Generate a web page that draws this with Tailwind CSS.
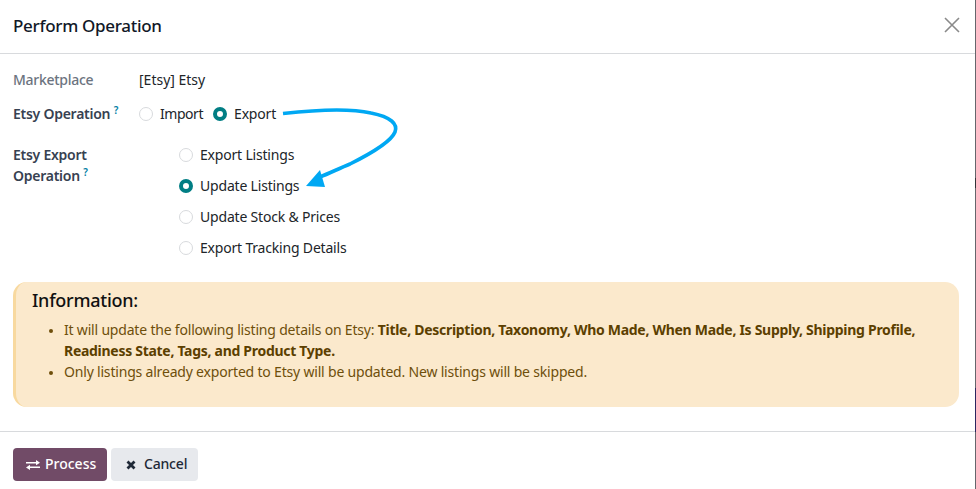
<!DOCTYPE html>
<html><head><meta charset="utf-8"><script src="https://cdn.jsdelivr.net/npm/@tailwindcss/browser@4"></script></head>
<body class="bg-white">
<div class="relative w-[976px] h-[489px] overflow-hidden bg-white font-['Noto_Sans',sans-serif] text-[14px] leading-[21px] text-[#212529] tracking-[-0.19px]">
  <header class="h-[54px] border-b border-[#d8dadd] flex items-center justify-between pl-[13px] pr-[15px] pb-[2px] mr-px">
    <h1 class="text-[17px] font-medium text-[#111827] tracking-[-0.3px] -mt-[1px]">Perform Operation</h1>
    <svg class="w-[16px] h-[16px] -mt-[1px]" viewBox="0 0 16 16"><path d="M1 1L15 15M15 1L1 15" stroke="#8a8a8a" stroke-width="1.6" fill="none"/></svg>
  </header>
  <main class="px-[13px] pt-[15px]">
    <div class="flex h-[21px]">
      <span class="w-[126px] font-medium text-[#6c7480] tracking-[-0.28px]">Marketplace</span>
      <span class="tracking-normal">[Etsy] Etsy</span>
    </div>
    <div class="flex h-[21px] mt-[13px] items-center">
      <span class="w-[126px] font-semibold text-[#374151] tracking-[-0.26px]">Etsy Operation <sup class="text-[#0180a5] text-[10px]">?</sup></span>
      <label class="flex items-center tracking-[-0.45px]"><i class="block w-[14px] h-[14px] rounded-full border border-[#d8dadd] mr-[7px]"></i>Import</label>
      <label class="flex items-center ml-[10px]"><i class="block w-[14px] h-[14px] rounded-full border-[4px] border-[#017e84] mr-[7px]"></i>Export</label>
    </div>
    <div class="flex mt-[20px]">
      <span class="w-[166px] font-semibold text-[#374151] tracking-[-0.26px]">Etsy Export<br>Operation <sup class="text-[#0180a5] text-[10px]">?</sup></span>
      <div class="flex flex-col gap-[10px]">
        <label class="flex items-center"><i class="block w-[14px] h-[14px] rounded-full border border-[#d8dadd] mr-[7px]"></i>Export Listings</label>
        <label class="flex items-center"><i class="block w-[14px] h-[14px] rounded-full border-[4px] border-[#017e84] mr-[7px]"></i>Update Listings</label>
        <label class="flex items-center"><i class="block w-[14px] h-[14px] rounded-full border border-[#d8dadd] mr-[7px]"></i>Update Stock &amp; Prices</label>
        <label class="flex items-center"><i class="block w-[14px] h-[14px] rounded-full border border-[#d8dadd] mr-[7px]"></i>Export Tracking Details</label>
      </div>
    </div>
    <section class="mt-[24px] w-[946px] h-[125px] rounded-[14px] bg-[#fbe9cc] border-l-[3px] border-[#f8d99f] pl-[16px] pt-[7px] text-[#6e4f0b]">
      <h2 class="text-[18px] leading-[22px] font-medium text-[#111] tracking-[-0.25px]">Information:</h2>
      <ul class="list-disc pl-[32px] mt-[8px] marker:text-[12px]">
        <li>It will update the following listing details on Etsy: <b class="font-bold text-[#5c3f00] tracking-[-0.29px]">Title, Description, Taxonomy, Who Made, When Made, Is Supply, Shipping Profile, Readiness State, Tags, and Product Type.</b></li>
        <li>Only listings already exported to Etsy will be updated. New listings will be skipped.</li>
      </ul>
    </section>
  </main>
  <footer class="absolute left-0 right-0 top-[431px] h-[58px] border-t border-[#d8dadd] flex items-start gap-[4px] pl-[13px] pt-[16px]">
    <button class="h-[33px] w-[94px] rounded-[4px] bg-[#714b67] text-white flex items-center gap-[5px] pl-[13px] pb-[2px] font-medium tracking-normal">
      <svg class="w-[14px] h-[12px] mt-[2px]" viewBox="0 0 14 12"><path d="M0 3H10V1L14 3.8L10 6.2V4.4H0ZM14 7.6H4V5.8L0 8.4L4 11V9H14Z" fill="white"/></svg>Process</button>
    <button class="h-[33px] w-[87px] rounded-[4px] bg-[#e7e9ed] text-[#1f2937] flex items-center gap-[8px] pl-[15px] pb-[2px] font-medium">
      <svg class="w-[10px] h-[10px] mt-[2px]" viewBox="0 0 10 10"><path d="M1.5 1.5L8.5 8.5M8.5 1.5L1.5 8.5" stroke="#1f2937" stroke-width="2.8" fill="none"/></svg>Cancel</button>
  </footer>
  <svg class="absolute left-0 top-0 pointer-events-none" width="976" height="489" viewBox="0 0 976 489">
    <path d="M283 113.5C305 111 345 107 371 113C391 117 398 124 395 132C391 142 372 153 350 164C340 168 330 173 320 177" stroke="#00a8f3" stroke-width="3.6" fill="none"/>
    <path d="M306 186L320 170L325 187Z" fill="#00a8f3"/>
  </svg>
  <div class="absolute right-0 top-0 bottom-0 w-px bg-[#66666c] flex flex-col">
    <i class="block h-[10px] mt-[178px] bg-[#333338]"></i>
    <i class="block h-[44px] mt-[200px] bg-[#2c2660]"></i>
  </div>
</div>
</body></html>
